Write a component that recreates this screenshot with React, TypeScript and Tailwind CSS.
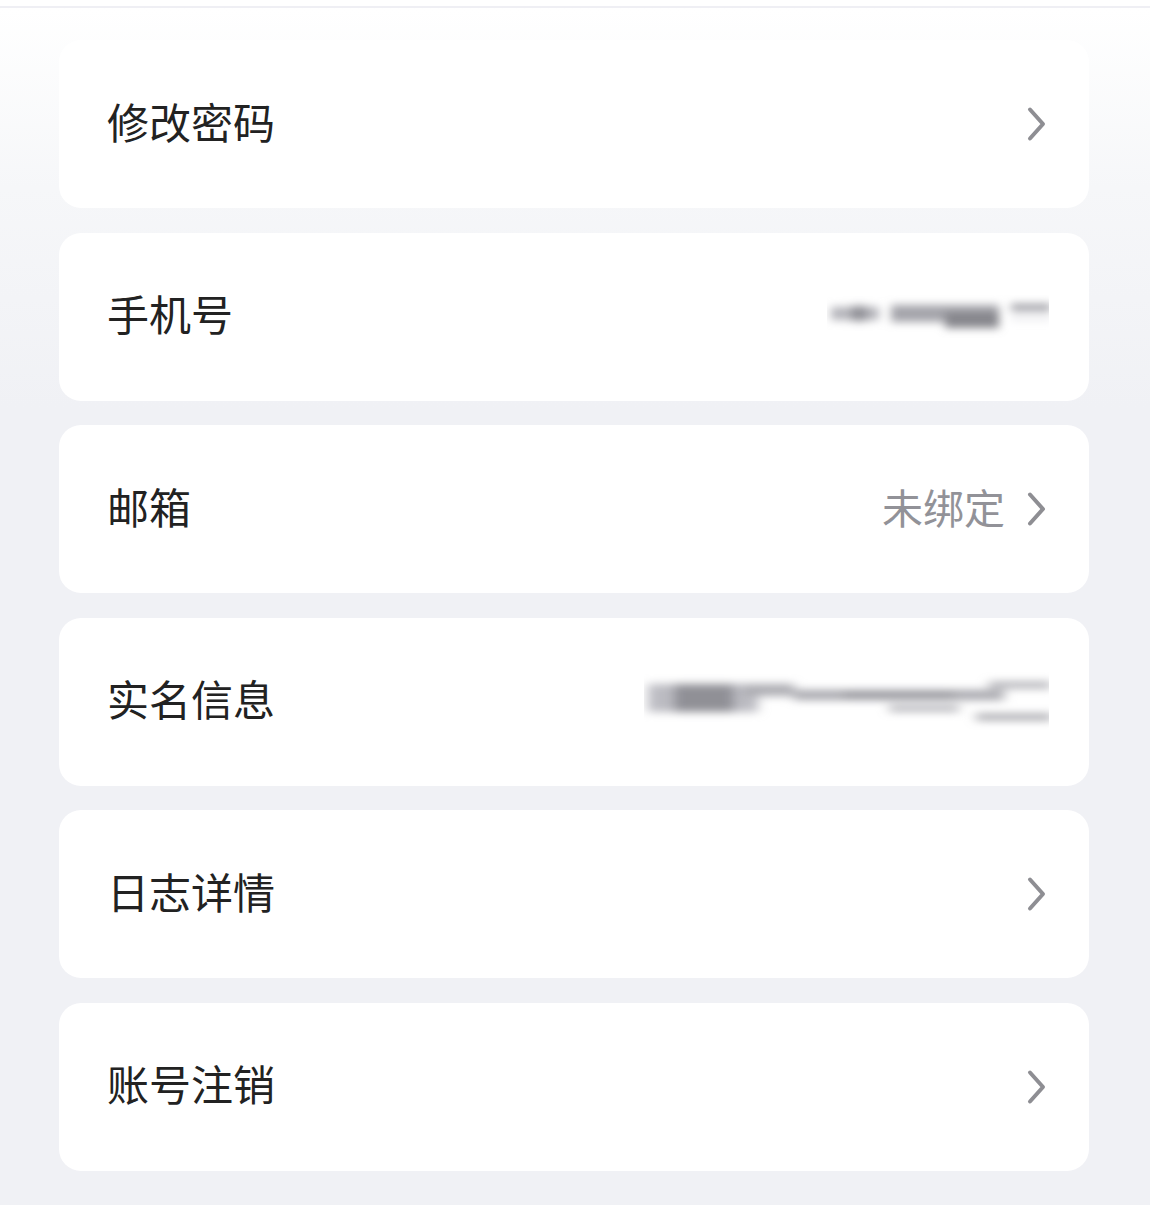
import React from 'react';

// Account settings list — each row is a white rounded card.

const font = { fontFamily: '"Noto Sans CJK SC", "Noto Sans", sans-serif' };

const Chevron: React.FC = () => (
    <svg width="20" height="36" viewBox="0 0 20 36" className="shrink-0">
        <path d="M3 3.5 L16 18 L3 32.5" fill="none" stroke="#8e8e93" strokeWidth="4" strokeLinecap="round" strokeLinejoin="round" />
    </svg>
);

// masked phone number, drawn blurred like the screenshot
const BlurPhone: React.FC = () => (
    <svg width="222" height="48" viewBox="0 0 222 48" className="mr-[-2px] mb-[-4px]">
        <defs>
            <filter id="bp" x="-10%" y="-50%" width="120%" height="200%">
                <feGaussianBlur stdDeviation="5 4" />
            </filter>
        </defs>
        <g filter="url(#bp)">
            <rect x="4" y="12" width="48" height="13" fill="#b4b4ba" />
            <rect x="24" y="11" width="16" height="15" fill="#909096" />
            <rect x="64" y="10" width="108" height="17" fill="#a4a4aa" />
            <rect x="118" y="17" width="54" height="16" fill="#86868c" />
            <rect x="184" y="9" width="40" height="7" fill="#9a9aa0" />
            <rect x="184" y="21" width="40" height="4" fill="#e6e6ea" />
        </g>
    </svg>
);

const BlurName: React.FC = () => (
    <svg width="405" height="64" viewBox="0 0 405 64" className="mr-[-2px]">
        <defs>
            <filter id="bn" x="-10%" y="-50%" width="120%" height="200%">
                <feGaussianBlur stdDeviation="6 4" />
            </filter>
        </defs>
        <g filter="url(#bn)">
            <rect x="4" y="14" width="110" height="28" fill="#bcbcc2" />
            <rect x="30" y="14" width="60" height="28" fill="#909096" />
            <rect x="100" y="14" width="50" height="12" fill="#ababb1" />
            <rect x="150" y="20" width="210" height="10" fill="#a6a6ac" />
            <rect x="200" y="22" width="110" height="6" fill="#8e8e94" />
            <rect x="345" y="12" width="62" height="6" fill="#a6a6ac" />
            <rect x="245" y="36" width="70" height="5" fill="#9e9ea4" />
            <rect x="332" y="44" width="76" height="6" fill="#9c9ca2" />
        </g>
    </svg>
);

type Row = { label: string; value?: React.ReactNode; arrow?: boolean };

const rows: Row[] = [
    { label: '修改密码', arrow: true },
    { label: '手机号', value: <BlurPhone /> },
    { label: '邮箱', value: <span className="text-[#929298] pb-[5px]">未绑定</span>, arrow: true },
    { label: '实名信息', value: <BlurName /> },
    { label: '日志详情', arrow: true },
    { label: '账号注销', arrow: true },
];

export default function App() {
    return (
        <div className="w-[1150px] min-h-[1205px] bg-white" style={font}>
            <div className="h-[6px] bg-white" />
            <div className="h-[2px] bg-[#efeff4]" />
            <div className="min-h-[1197px] bg-[linear-gradient(to_bottom,#ffffff_0px,#f6f7f9_180px,#f0f1f5_400px,#f0f1f5_100%)] pt-[32px] pb-[34px] pl-[59px]">
                <div className="w-[1030px] flex flex-col gap-[24.6px]">
                    {rows.map(r => (
                        <div key={r.label} className="h-[168px] rounded-[22px] bg-white flex items-center justify-between pl-[48px] pr-[42px]">
                            <span className="text-[42px] leading-none text-[#222222] pb-[7px]">{r.label}</span>
                            <div className="flex items-center gap-[22px] text-[41px] leading-none">
                                {r.value}
                                {r.arrow && <Chevron />}
                            </div>
                        </div>
                    ))}
                </div>
            </div>
        </div>
    );
}
